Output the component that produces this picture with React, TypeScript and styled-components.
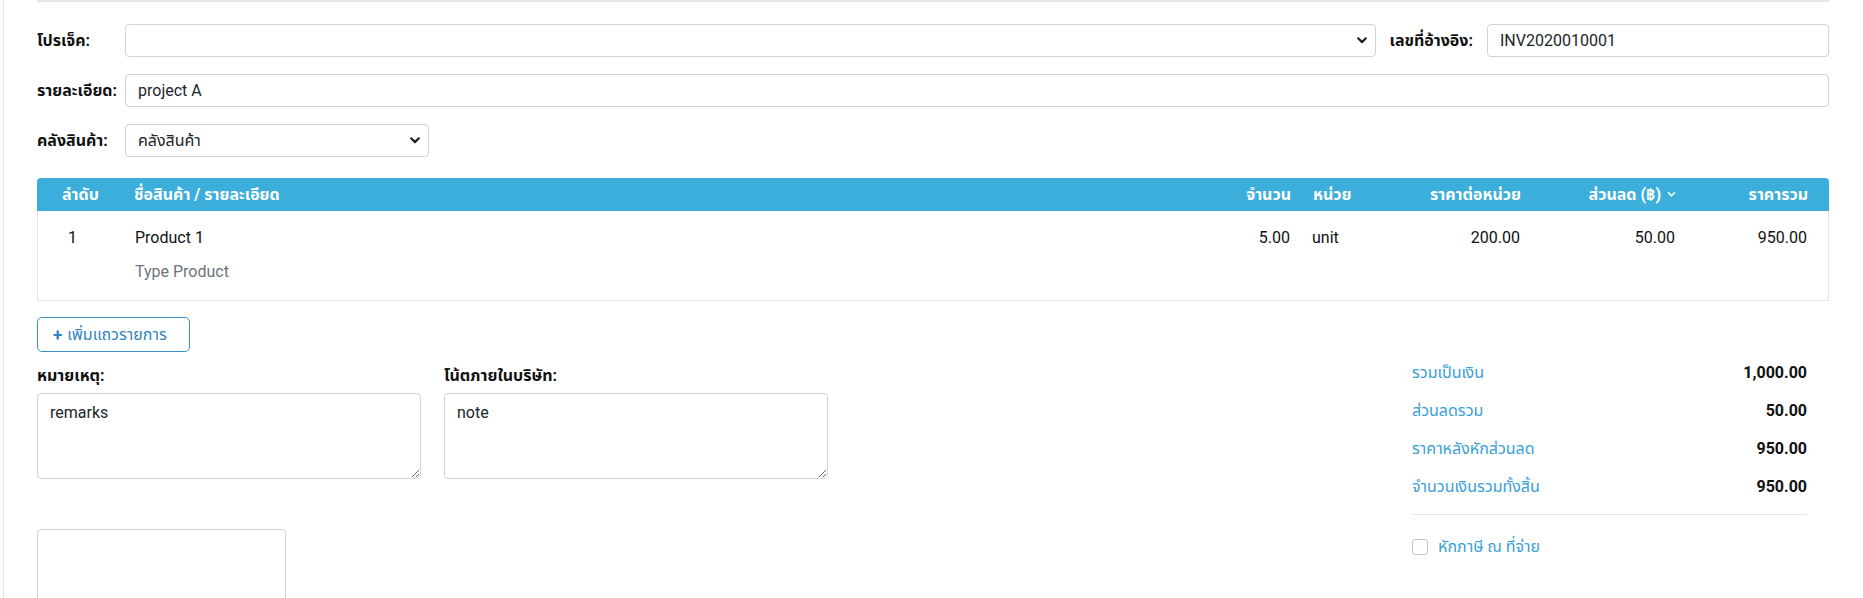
import React from "react";
import styled, { createGlobalStyle } from "styled-components";

const BASE = `Roboto, "Noto Sans Thai", "Noto Sans", sans-serif`;

const GlobalStyle = createGlobalStyle`
  html, body { margin: 0; padding: 0; background: #fff; overflow: hidden; }
  body { font-family: ${BASE}; color: #212529; }
  * { box-sizing: border-box; }
`;

const Frame = styled.div`
  margin-left: 3px;
  border-left: 1px solid #e3e3e3;
  padding: 0 34px 0 33px;
  min-height: 640px;
`;

const TopRule = styled.div`
  height: 2px;
  background: #e6e6e6;
`;

const FormSection = styled.div`
  padding-top: 22px;
  display: flex;
  flex-direction: column;
  gap: 17px;
`;

const FieldRow = styled.div`
  display: grid;
  grid-template-columns: 88px 1251px 1fr 342px;
  align-items: center;
  height: 33px;
`;

const FullRow = styled(FieldRow)`
  grid-template-columns: 88px 1fr;
`;

const ShortRow = styled(FieldRow)`
  grid-template-columns: 88px 304px;
`;

const Label = styled.label<{ $right?: boolean }>`
  font-size: 16px;
  font-weight: 700;
  color: #111;
  white-space: nowrap;
  display: flex;
  justify-content: ${(p) => (p.$right ? "flex-end" : "flex-start")};
  padding-right: ${(p) => (p.$right ? "14px" : "0")};
`;

const fieldCss = `
  height: 33px;
  border: 1px solid #ced4da;
  border-radius: 4px;
  background: #fff;
  font-family: ${BASE};
  font-size: 16px;
  color: #212529;
  padding: 0 12px;
  outline: none;
`;

const TextInput = styled.input`
  ${fieldCss}
  width: 100%;
  min-width: 0;
`;

const SelectWrap = styled.div`
  position: relative;
  min-width: 0;
`;

const SelectBox = styled.select`
  ${fieldCss}
  width: 100%;
  appearance: none;
  -webkit-appearance: none;
  padding-right: 32px;
`;

const Chevron = styled.svg`
  position: absolute;
  right: 9px;
  top: 12px;
  width: 10px;
  height: 9px;
  pointer-events: none;
`;

const ChevronIcon = () => (
  <Chevron viewBox="0 0 10 8">
    <path d="M1.2 1.8 L5 5.6 L8.8 1.8" fill="none" stroke="#222" strokeWidth="2.2" strokeLinecap="round" strokeLinejoin="round" />
  </Chevron>
);

const Table = styled.div`
  margin-top: 21px;
`;

const GRID = "85px 1fr 124px 106px 124px 155px 141px";

const HeadRow = styled.div`
  display: grid;
  grid-template-columns: ${GRID};
  height: 33px;
  align-items: center;
  background: #3caedb;
  border-radius: 4px 4px 0 0;
`;

const HeadCell = styled.div<{ $align?: string; $pl?: number; $pr?: number }>`
  color: #fff;
  font-weight: 700;
  font-size: 16px;
  padding-left: ${(p) => p.$pl ?? 12}px;
  padding-right: ${(p) => p.$pr ?? 12}px;
  white-space: nowrap;
  display: flex;
  align-items: center;
  justify-content: ${(p) => (p.$align === "right" ? "flex-end" : "flex-start")};
  gap: 6px;
`;

const BodyRow = styled.div`
  display: grid;
  grid-template-columns: ${GRID};
  border: 1px solid #e6e6e6;
  border-top: none;
  padding: 15px 0 16px;
`;

const Cell = styled.div<{ $align?: string; $pl?: number; $pr?: number }>`
  font-size: 16px;
  line-height: 24px;
  color: #111;
  text-align: ${(p) => p.$align ?? "left"};
  padding-left: ${(p) => p.$pl ?? 12}px;
  padding-right: ${(p) => p.$pr ?? 12}px;
`;

const SubText = styled.div`
  margin-top: 10px;
  color: #6c757d;
`;

const AddButton = styled.button`
  margin-top: 16px;
  height: 35px;
  width: 153px;
  border: 1px solid #3a8fc6;
  border-radius: 5px;
  background: #fff;
  color: #2f86bf;
  font-family: ${BASE};
  font-size: 16px;
  padding: 0 0 0 15px;
  display: flex;
  align-items: center;
  gap: 5px;
  cursor: pointer;
`;

const Plus = styled.span`
  font-weight: 700;
  font-size: 17px;
`;

const Bottom = styled.div`
  display: grid;
  grid-template-columns: 1fr 395px;
  padding-right: 22px;
`;

const NotesCol = styled.div`
  padding-top: 12px;
`;

const NotesRow = styled.div`
  display: grid;
  grid-template-columns: 384px 384px;
  column-gap: 23px;
`;

const NoteField = styled.div`
  display: flex;
  flex-direction: column;
  gap: 5px;
`;

const NoteLabel = styled.div`
  font-size: 16px;
  font-weight: 700;
  color: #111;
  line-height: 24px;
`;

const TextArea = styled.textarea`
  height: 86px;
  border: 1px solid #ced4da;
  border-radius: 4px;
  font-family: ${BASE};
  font-size: 16px;
  line-height: 24px;
  color: #212529;
  padding: 7px 12px;
  resize: vertical;
  outline: none;
`;

const EmptyBox = styled.div`
  margin-top: 50px;
  width: 249px;
  height: 120px;
  border: 1px solid #ced4da;
  border-radius: 4px;
`;

const Summary = styled.div`
  padding-top: 2px;
`;

const SumRow = styled.div`
  display: flex;
  justify-content: space-between;
  align-items: center;
  height: 38px;
  line-height: 24px;
`;

const SumLabel = styled.span`
  color: #3a9fd6;
  font-size: 16px;
`;

const SumValue = styled.span`
  color: #111;
  font-size: 16px;
  font-weight: 700;
`;

const Divider = styled.div`
  margin-top: 8px;
  height: 1px;
  background: #e6e6e6;
`;

const CheckRow = styled.label`
  margin-top: 20px;
  display: flex;
  align-items: center;
  gap: 10px;
  line-height: 24px;
  color: #3a9fd6;
  font-size: 16px;
`;

const CheckBox = styled.span`
  width: 16px;
  height: 16px;
  border: 1px solid #bfc5cc;
  border-radius: 3px;
  background: #fff;
`;

export default function App() {
  return (
    <>
      <GlobalStyle />
      <Frame>
        <TopRule />
        <FormSection>
          <FieldRow>
            <Label>โปรเจ็ค:</Label>
            <SelectWrap>
              <SelectBox defaultValue="">
                <option value=""></option>
              </SelectBox>
              <ChevronIcon />
            </SelectWrap>
            <Label $right>เลขที่อ้างอิง:</Label>
            <TextInput defaultValue="INV2020010001" />
          </FieldRow>
          <FullRow>
            <Label>รายละเอียด:</Label>
            <TextInput defaultValue="project A" />
          </FullRow>
          <ShortRow>
            <Label>คลังสินค้า:</Label>
            <SelectWrap>
              <SelectBox defaultValue="w">
                <option value="w">คลังสินค้า</option>
              </SelectBox>
              <ChevronIcon />
            </SelectWrap>
          </ShortRow>
        </FormSection>

        <Table>
          <HeadRow>
            <HeadCell $pl={25}>ลำดับ</HeadCell>
            <HeadCell>ชื่อสินค้า / รายละเอียด</HeadCell>
            <HeadCell $align="right">จำนวน</HeadCell>
            <HeadCell $pl={10}>หน่วย</HeadCell>
            <HeadCell $align="right">ราคาต่อหน่วย</HeadCell>
            <HeadCell $align="right">
              ส่วนลด (฿)
              <svg width="9" height="7" viewBox="0 0 10 8">
                <path d="M1.5 2 L5 5.5 L8.5 2" fill="none" stroke="#fff" strokeWidth="1.8" strokeLinecap="round" strokeLinejoin="round" />
              </svg>
            </HeadCell>
            <HeadCell $align="right" $pr={21}>ราคารวม</HeadCell>
          </HeadRow>
          <BodyRow>
            <Cell $pl={30}>1</Cell>
            <Cell>
              Product 1
              <SubText>Type Product</SubText>
            </Cell>
            <Cell $align="right">5.00</Cell>
            <Cell $pl={10}>unit</Cell>
            <Cell $align="right">200.00</Cell>
            <Cell $align="right">50.00</Cell>
            <Cell $align="right" $pr={21}>950.00</Cell>
          </BodyRow>
        </Table>

        <AddButton>
          <Plus>+</Plus> เพิ่มแถวรายการ
        </AddButton>

        <Bottom>
          <NotesCol>
            <NotesRow>
              <NoteField>
                <NoteLabel>หมายเหตุ:</NoteLabel>
                <TextArea defaultValue="remarks" />
              </NoteField>
              <NoteField>
                <NoteLabel>โน้ตภายในบริษัท:</NoteLabel>
                <TextArea defaultValue="note" />
              </NoteField>
            </NotesRow>
            <EmptyBox />
          </NotesCol>
          <Summary>
            <SumRow>
              <SumLabel>รวมเป็นเงิน</SumLabel>
              <SumValue>1,000.00</SumValue>
            </SumRow>
            <SumRow>
              <SumLabel>ส่วนลดรวม</SumLabel>
              <SumValue>50.00</SumValue>
            </SumRow>
            <SumRow>
              <SumLabel>ราคาหลังหักส่วนลด</SumLabel>
              <SumValue>950.00</SumValue>
            </SumRow>
            <SumRow>
              <SumLabel>จำนวนเงินรวมทั้งสิ้น</SumLabel>
              <SumValue>950.00</SumValue>
            </SumRow>
            <Divider />
            <CheckRow>
              <CheckBox />
              หักภาษี ณ ที่จ่าย
            </CheckRow>
          </Summary>
        </Bottom>
      </Frame>
    </>
  );
}
